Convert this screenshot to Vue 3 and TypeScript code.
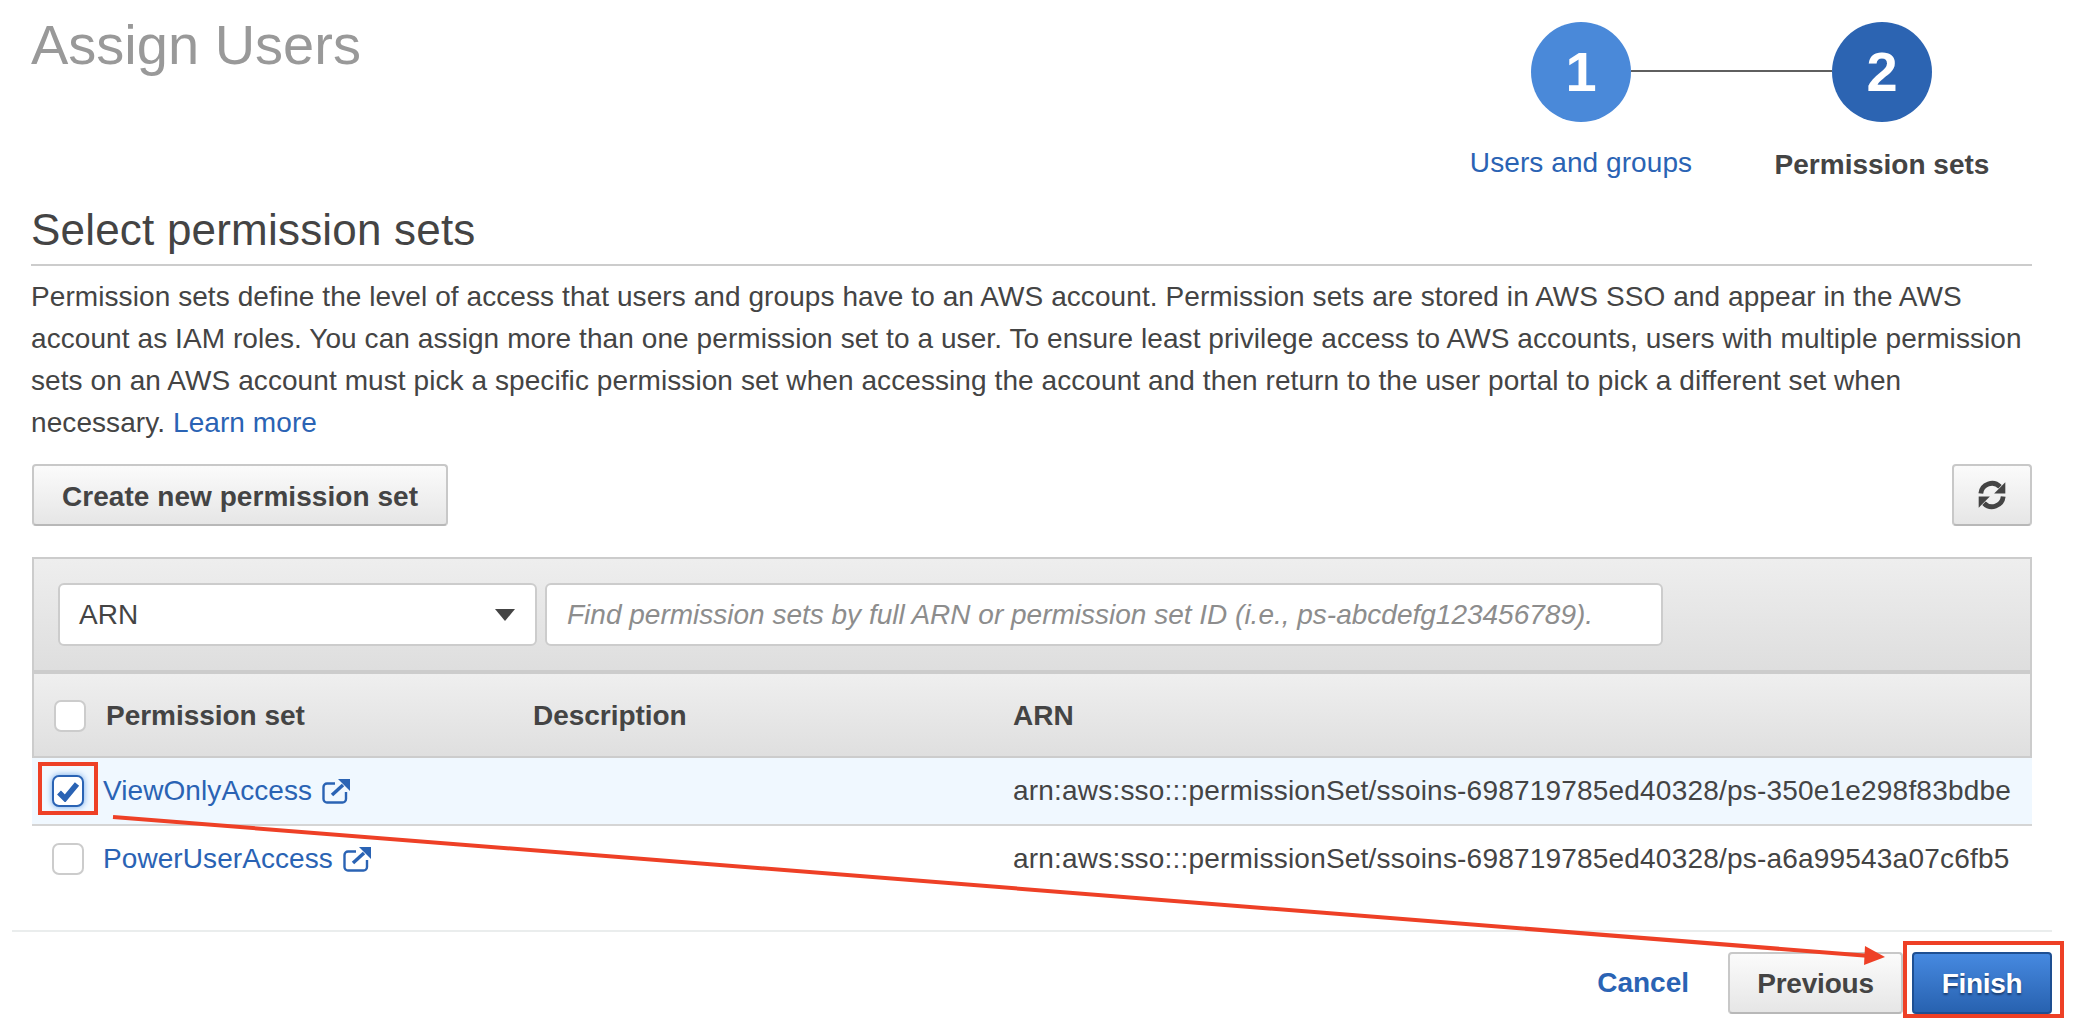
<script setup lang="ts">
type PermissionSet = {
  name: string;
  arn: string;
  selected: boolean;
};

const permissionSets: PermissionSet[] = [
  {
    name: "ViewOnlyAccess",
    arn: "arn:aws:sso:::permissionSet/ssoins-698719785ed40328/ps-350e1e298f83bdbe",
    selected: true,
  },
  {
    name: "PowerUserAccess",
    arn: "arn:aws:sso:::permissionSet/ssoins-698719785ed40328/ps-a6a99543a07c6fb5",
    selected: false,
  },
];
</script>

<template>
  <main class="page">
    <header class="top">
      <h1>Assign Users</h1>
      <ol class="steps">
        <li class="step">
          <span class="circle done">1</span>
          <a class="step-link">Users and groups</a>
        </li>
        <li class="step">
          <span class="circle current">2</span>
          <strong class="step-now">Permission sets</strong>
        </li>
      </ol>
    </header>

    <section class="content">
      <h2>Select permission sets</h2>
      <p class="intro">
        Permission sets define the level of access that users and groups have to an AWS account. Permission sets are stored in AWS SSO and appear in the AWS account as IAM roles. You can assign more than one permission set to a user. To ensure least privilege access to AWS accounts, users with multiple permission sets on an AWS account must pick a specific permission set when accessing the account and then return to the user portal to pick a different set when necessary.
        <a>Learn more</a>
      </p>

      <div class="toolbar">
        <button type="button" class="btn create">Create new permission set</button>
        <button type="button" class="btn refresh" aria-label="Refresh">
          <svg width="32" height="32" viewBox="0 0 30 30">
            <path d="M4.500 13.500a10.500 10.500 0 0 1 18-6.200" fill="none" stroke="#444" stroke-width="4.500" />
            <path d="M27.500 3v10.500H17z" fill="#444" />
            <path d="M25.500 16.500a10.500 10.500 0 0 1-18 6.200" fill="none" stroke="#444" stroke-width="4.500" />
            <path d="M2.500 27V16.500h10.500z" fill="#444" />
          </svg>
        </button>
      </div>

      <div class="table">
        <div class="filter">
          <div class="select">
            <span>ARN</span>
            <i class="caret"></i>
          </div>
          <div class="search">Find permission sets by full ARN or permission set ID (i.e., ps-abcdefg123456789).</div>
        </div>
        <div class="row head">
          <span class="check"></span>
          <span>Permission set</span>
          <span>Description</span>
          <span>ARN</span>
        </div>
        <div v-for="item in permissionSets" :key="item.name" class="row" :class="{ selected: item.selected }">
          <span class="check" :class="{ on: item.selected }">
            <svg v-if="item.selected" width="24" height="22" viewBox="0 0 24 22">
              <path d="M3 12.500l6 6L21 4" fill="none" stroke="#2a63b4" stroke-width="5.500" />
            </svg>
          </span>
          <span class="name">
            <a>{{ item.name }}</a>
            <svg width="28" height="26" viewBox="0 0 28 26">
              <path d="M13 5.500H5A3.500 3.500 0 0 0 1.500 9v12A3.500 3.500 0 0 0 5 24.500h15.500A3.500 3.500 0 0 0 24 21v-7" fill="none" stroke="#2a63b4" stroke-width="2.400" />
              <path d="M10 17L21 7" fill="none" stroke="#2a63b4" stroke-width="3.500" />
              <path d="M16 1h12v12z" fill="#2a63b4" />
            </svg>
          </span>
          <span></span>
          <span class="arn">{{ item.arn }}</span>
        </div>
      </div>
    </section>

    <footer class="actions">
      <a class="cancel">Cancel</a>
      <button type="button" class="btn previous">Previous</button>
      <button type="button" class="btn finish">Finish</button>
    </footer>

    <!-- red annotations drawn on top of the screenshot -->
    <svg class="marks" width="2078" height="1026" viewBox="0 0 2078 1026">
      <rect x="40" y="764" width="56" height="49" fill="none" stroke="#ee4026" stroke-width="4" />
      <rect x="1905" y="943" width="157" height="73" fill="none" stroke="#ee4026" stroke-width="4" />
      <path d="M113 817L1870 956" stroke="#ee4026" stroke-width="4" />
      <path d="M1865 946L1885 957L1864 965z" fill="#ee4026" />
    </svg>
  </main>
</template>

<style>
body {
  background: #fff;
}
</style>

<style scoped>
.page {
  position: relative;
  width: 2078px;
  height: 1026px;
  overflow: hidden;
  font-family: "Liberation Sans", Arial, sans-serif;
  font-size: 28px;
  line-height: 42px;
  letter-spacing: 0.08px;
  color: #444;
  background: #fff;
}

a {
  color: #2a63b4;
}

.top {
  display: flex;
  justify-content: space-between;
  height: 196px;
  padding: 0 85px 0 31px;
}

h1 {
  margin: 13px 0 0;
  font-size: 56px;
  line-height: 64px;
  font-weight: 400;
  letter-spacing: 0;
  color: #999;
}

.steps {
  display: flex;
  gap: 79px;
  list-style: none;
  margin: 22px 0 0;
  padding: 0;
}

.step {
  position: relative;
  display: flex;
  flex-direction: column;
  align-items: center;
  width: 222px;
}

.step:first-child::after {
  content: "";
  position: absolute;
  top: 48px;
  left: 161px;
  width: 201px;
  height: 2px;
  background: #5f5f5f;
}

.circle {
  width: 100px;
  height: 100px;
  border-radius: 50%;
  color: #fff;
  font-size: 56px;
  font-weight: 700;
  line-height: 100px;
  text-align: center;
}

.done {
  background: #4a89d9;
}

.current {
  background: #2c64b2;
}

.step-link {
  margin-top: 20px;
  white-space: nowrap;
}

.step-now {
  margin-top: 22px;
  white-space: nowrap;
  letter-spacing: 0;
}

.content {
  padding: 0 46px 0 31px;
}

h2 {
  margin: 0;
  height: 68px;
  border-bottom: 2px solid #ccc;
  font-size: 44px;
  line-height: 68px;
  font-weight: 400;
  letter-spacing: 0.2px;
}

.intro {
  margin: 10px 0 0;
}

.toolbar {
  display: flex;
  justify-content: space-between;
  margin: 20px 0 0 1px;
}

.btn {
  height: 62px;
  border: 2px solid #c8c8c8;
  border-bottom-color: #b8b8b8;
  border-radius: 4px;
  background: linear-gradient(#fbfbfb, #e6e6e6);
  color: #444;
  font: 700 28px "Liberation Sans", Arial, sans-serif;
  letter-spacing: 0;
  padding: 2px 0 0;
}

.create {
  width: 416px;
  padding-top: 4px;
  letter-spacing: 0.05px;
}

.refresh {
  display: flex;
  align-items: center;
  justify-content: center;
  width: 80px;
  padding: 0;
}

.table {
  margin: 31px 0 0 1px;
  border-top: 2px solid #ccc;
}

.filter {
  display: flex;
  gap: 8px;
  height: 115px;
  padding: 24px 0 0 24px;
  box-sizing: border-box;
  border: solid #ccc;
  border-width: 0 2px 4px;
  background: linear-gradient(#eeeeee, #dedede);
}

.select,
.search {
  display: flex;
  align-items: center;
  height: 63px;
  box-sizing: border-box;
  border: 2px solid #ccc;
  border-radius: 6px;
  background: #fff;
}

.select {
  justify-content: space-between;
  width: 479px;
  padding: 0 20px 0 19px;
}

.caret {
  border: solid transparent;
  border-width: 12px 10px 0;
  border-top-color: #444;
}

.search {
  width: 1118px;
  padding-left: 20px;
  color: #8d8d8d;
  font-style: italic;
  letter-spacing: 0;
}

.row {
  display: grid;
  grid-template-columns: 51px 430px 480px 1fr;
  align-items: center;
  height: 68px;
  box-sizing: border-box;
  border-bottom: 2px solid #d5d5d5;
  padding-left: 20px;
}

.head {
  height: 84px;
  padding: 2px 0 0 20px;
  grid-template-columns: 52px 427px 480px 1fr;
  border: solid #ccc;
  border-width: 0 2px 2px;
  background: linear-gradient(#efefef, #dfdfdf);
  font-weight: 700;
  letter-spacing: -0.03px;
}

.row:last-child {
  border-bottom-color: transparent;
}

.selected {
  background: #f0f8ff;
}

.check {
  display: flex;
  align-items: center;
  justify-content: center;
  width: 32px;
  height: 32px;
  box-sizing: border-box;
  border: 2px solid #ccc;
  border-radius: 7px;
  background: #fff;
}

.check.on {
  border-color: #2a63b4;
  box-shadow: 0 0 6px #6ea6e8;
}

.name {
  display: flex;
  align-items: center;
  gap: 10px;
}

.arn {
  white-space: nowrap;
  letter-spacing: 0.2px;
}

.actions {
  position: absolute;
  left: 12px;
  right: 26px;
  top: 930px;
  display: flex;
  justify-content: flex-end;
  align-items: center;
  height: 84px;
  padding-top: 20px;
  box-sizing: border-box;
  border-top: 2px solid #eaeded;
}

.cancel {
  margin-right: 39px;
  font-weight: 700;
  letter-spacing: 0;
}

.previous {
  width: 175px;
  margin-right: 9px;
  letter-spacing: -0.2px;
}

.finish {
  width: 140px;
  border-color: #1e4f92;
  background: linear-gradient(#4689e0, #2862b0);
  color: #fff;
  letter-spacing: -0.3px;
  text-shadow: 0 2px 2px #1b3f72;
}

.marks {
  position: absolute;
  top: 0;
  left: 0;
  pointer-events: none;
}
</style>
